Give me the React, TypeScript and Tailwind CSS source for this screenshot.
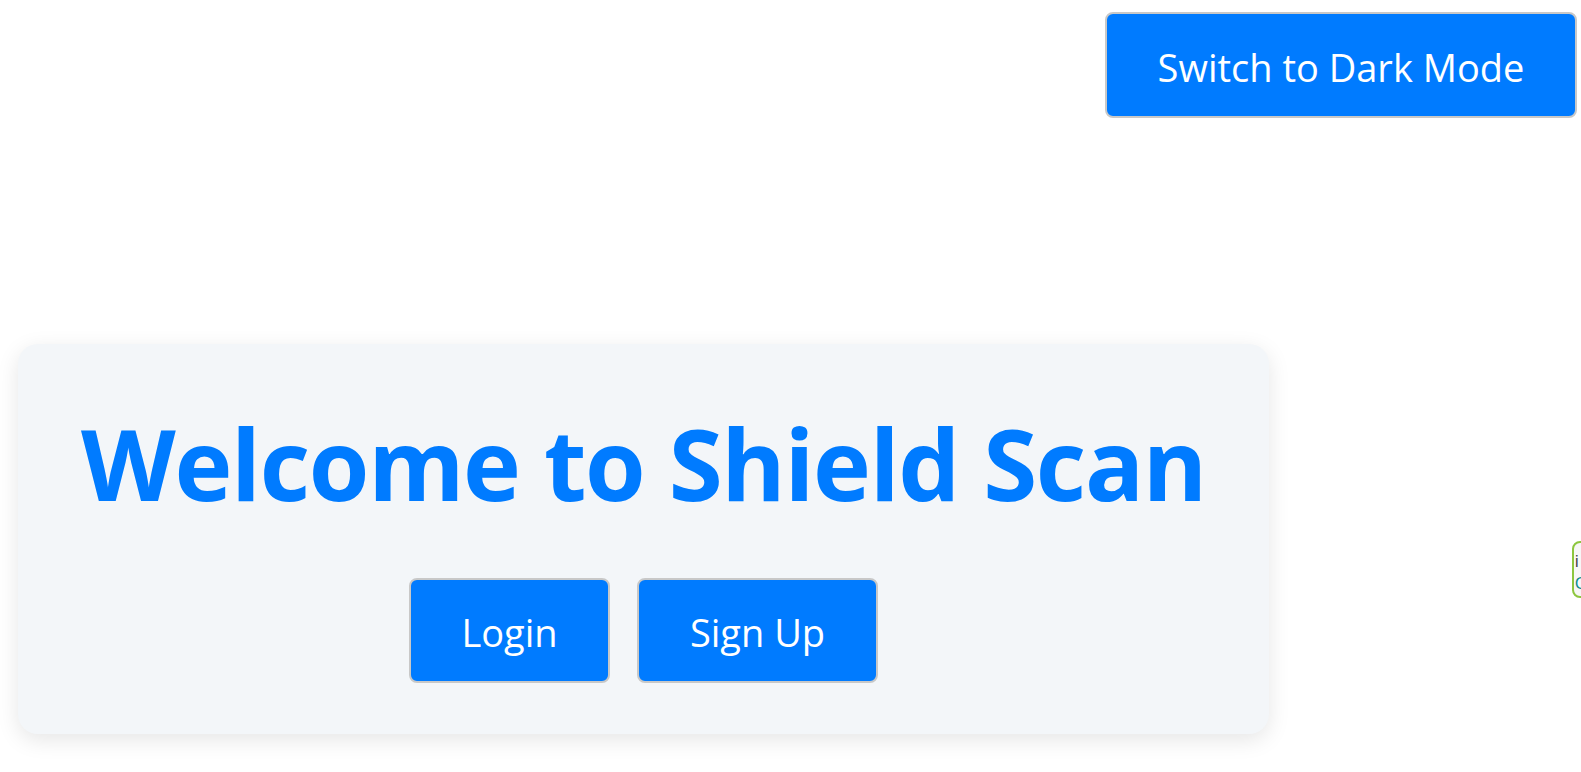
import React from "react";

const btn =
  "flex items-center justify-center box-border rounded-[8px] border-2 border-[#c8c8c8] bg-[#007bff] text-white text-[38px] leading-none pt-[3px]";

export default function App() {
  return (
    <div className="relative w-[1581px] h-[772px] overflow-hidden bg-white font-['Open_Sans',sans-serif]">
      <div className="flex justify-end pt-[12px] pr-[4px]">
        <button className={`${btn} w-[472px] h-[106px]`}>Switch to Dark Mode</button>
      </div>
      <div className="ml-[18px] mt-[226px] w-[1251px] h-[390px] rounded-[20px] bg-[#f3f6f9] shadow-[0_6px_22px_rgba(0,0,0,0.10)] flex flex-col items-center pt-[70px]">
        <h1 className="text-[98px] leading-none font-bold tracking-[-1.3px] text-[#007bff] whitespace-nowrap">
          Welcome to Shield Scan
        </h1>
        <div className="flex gap-[27px] mt-[66px]">
          <button className={`${btn} w-[201px] h-[105px]`}>Login</button>
          <button className={`${btn} w-[241px] h-[105px]`}>Sign Up</button>
        </div>
      </div>
      <div className="absolute left-[1572px] top-[541px] w-[40px] h-[57px] box-border rounded-[8px] border-2 border-[#8dc63f] bg-[#f7f7f7] flex flex-col pl-[1px] pt-[8px] text-[16px] leading-[22px] font-['Liberation_Sans',sans-serif]">
        <span className="text-[#444]">i</span>
        <span className="text-[#0a8a8a]">O</span>
      </div>
    </div>
  );
}
